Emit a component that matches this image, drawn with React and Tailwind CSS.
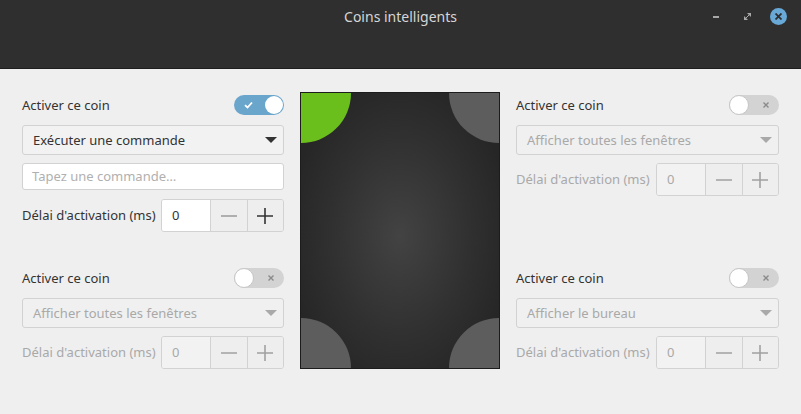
import { useState } from "react";

const font = { fontFamily: '"Noto Sans", "Open Sans", sans-serif' };

function Toggle({ on }) {
  return (
    <div
      className={`relative h-[20px] w-[50px] rounded-full ${
        on ? "bg-[#6aa5cc]" : "bg-[#d3d3d3]"
      }`}
    >
      {on ? (
        <>
          <svg className="absolute left-[10px] top-[6px] h-[8px] w-[9px]" viewBox="0 0 9 8">
            <path d="M1 4.2 L3.5 6.5 L8 1.5" fill="none" stroke="white" strokeWidth="1.8" />
          </svg>
          <div className="absolute right-[1px] top-[1px] h-[18px] w-[18px] rounded-full bg-white" />
        </>
      ) : (
        <>
          <div className="absolute left-0 top-0 h-[20px] w-[20px] rounded-full border border-[#c6c6c6] bg-white" />
          <svg className="absolute right-[10px] top-[7px] h-[6px] w-[6px]" viewBox="0 0 6 6">
            <path d="M0.5 0.5 L5.5 5.5 M5.5 0.5 L0.5 5.5" stroke="#8a8a8a" strokeWidth="1.4" />
          </svg>
        </>
      )}
    </div>
  );
}

function Select({ label, on }) {
  return (
    <div
      className={`flex h-[30px] items-center justify-between rounded-[3px] border border-[#d2d2d2] pl-[10px] pr-[6px] text-[13px] ${
        on ? "bg-[#f2f2f2] text-[#333]" : "bg-[#f0f0f0] text-[#a9a9a9]"
      }`}
    >
      <span className="pt-[1px]">{label}</span>
      <svg className="h-[6px] w-[12px]" viewBox="0 0 12 6">
        <path d="M0 0 L12 0 L6 6 Z" fill={on ? "#333" : "#a9a9a9"} />
      </svg>
    </div>
  );
}

function Spin({ on }) {
  const c = on ? "#333" : "#a0a0a0";
  return (
    <div className="flex items-center justify-between">
      <span className={`pt-[1px] text-[13px] ${on ? "text-[#333]" : "text-[#a9a9a9]"}`}>
        Délai d'activation (ms)
      </span>
      <div className="flex h-[33px] w-[123px] overflow-hidden rounded-[3px] border border-[#d2d2d2]">
        <div
          className={`flex w-[49px] items-center pl-[10px] text-[13px] ${
            on ? "bg-white text-[#333]" : "bg-[#f2f2f2] text-[#a9a9a9]"
          }`}
        >
          0
        </div>
        <div className="flex w-[37px] items-center justify-center border-l border-[#d2d2d2] bg-[#eeeeee]">
          <svg className="h-[2px] w-[16px]" viewBox="0 0 16 2">
            <path d="M0 1 L16 1" stroke={on ? "#9a9a9a" : "#a0a0a0"} strokeWidth="1.6" />
          </svg>
        </div>
        <div className="flex w-[37px] items-center justify-center border-l border-[#d2d2d2] bg-[#eeeeee]">
          <svg className="h-[16px] w-[16px]" viewBox="0 0 16 16">
            <path d="M0 8 L16 8 M8 0 L8 16" stroke={c} strokeWidth="1.6" />
          </svg>
        </div>
      </div>
    </div>
  );
}

function Corner({ on, action, command }) {
  return (
    <div className="flex flex-col">
      <div className="flex h-[20px] items-center justify-between">
        <span className="pt-[2px] text-[13px] text-[#333]">Activer ce coin</span>
        <Toggle on={on} />
      </div>
      <div className="mt-[10px]">
        <Select label={action} on={on} />
      </div>
      {command && (
        <div className="mt-[8px] flex h-[27px] items-center rounded-[3px] border border-[#d2d2d2] bg-white pl-[9px] pt-[1px] text-[13px] text-[#b0b0b0]">
          Tapez une commande…
        </div>
      )}
      <div className={command ? "mt-[9px]" : "mt-[8px]"}>
        <Spin on={on} />
      </div>
    </div>
  );
}

export default function App() {
  const [corners] = useState({
    tl: { on: true, action: "Exécuter une commande", command: true },
    tr: { on: false, action: "Afficher toutes les fenêtres" },
    bl: { on: false, action: "Afficher toutes les fenêtres" },
    br: { on: false, action: "Afficher le bureau" },
  });

  return (
    <div className="h-[414px] w-[801px] overflow-hidden bg-[#efefef]" style={font}>
      {/* Title bar */}
      <div className="relative h-[69px] border-b border-[#1e1e1e] bg-[#2f2f2f]">
        <div className="flex h-[32px] items-center justify-center text-[14px] text-[#d6d6d6]">
          Coins intelligents
        </div>
        <div className="absolute right-[14px] top-[8px] flex items-center">
          <div className="h-[2px] w-[6px] bg-[#a8a8a8]" />
          <svg className="ml-[25px] h-[7px] w-[7px]" viewBox="0 0 7 7">
            <path d="M0 3 L0 7 L4 7 Z M3 0 L7 0 L7 4 Z" fill="#a8a8a8" />
            <path d="M1 6 L6 1" stroke="#a8a8a8" strokeWidth="1" />
          </svg>
          <div className="ml-[19px] flex h-[17px] w-[17px] items-center justify-center rounded-full bg-[#68a9d8]">
            <svg className="h-[7px] w-[7px]" viewBox="0 0 7 7">
              <path d="M0.5 0.5 L6.5 6.5 M6.5 0.5 L0.5 6.5" stroke="#2f2f2f" strokeWidth="1.8" />
            </svg>
          </div>
        </div>
      </div>

      {/* Body */}
      <div className="flex gap-[16px] px-[22px] pt-[23px]">
        <div className="flex h-[277px] w-[262px] flex-col justify-between pt-[3px]">
          <Corner {...corners.tl} />
          <Corner {...corners.bl} />
        </div>

        {/* Preview */}
        <div
          className="relative h-[277px] w-[200px] shrink-0 overflow-hidden border border-[#1c1c1c]"
          style={{
            background: "radial-gradient(ellipse at 50% 52%, #434343 0%, #303030 50%, #262626 80%)",
          }}
        >
          <div className="absolute -left-[50px] -top-[50px] h-[100px] w-[100px] rounded-full bg-[#6bbf1c]" />
          <div className="absolute -right-[50px] -top-[50px] h-[100px] w-[100px] rounded-full bg-[#5d5d5d]" />
          <div className="absolute -bottom-[50px] -left-[50px] h-[100px] w-[100px] rounded-full bg-[#5d5d5d]" />
          <div className="absolute -bottom-[50px] -right-[50px] h-[100px] w-[100px] rounded-full bg-[#5d5d5d]" />
        </div>

        <div className="flex h-[277px] w-[263px] flex-col justify-between pt-[3px]">
          <Corner {...corners.tr} />
          <Corner {...corners.br} />
        </div>
      </div>
    </div>
  );
}
